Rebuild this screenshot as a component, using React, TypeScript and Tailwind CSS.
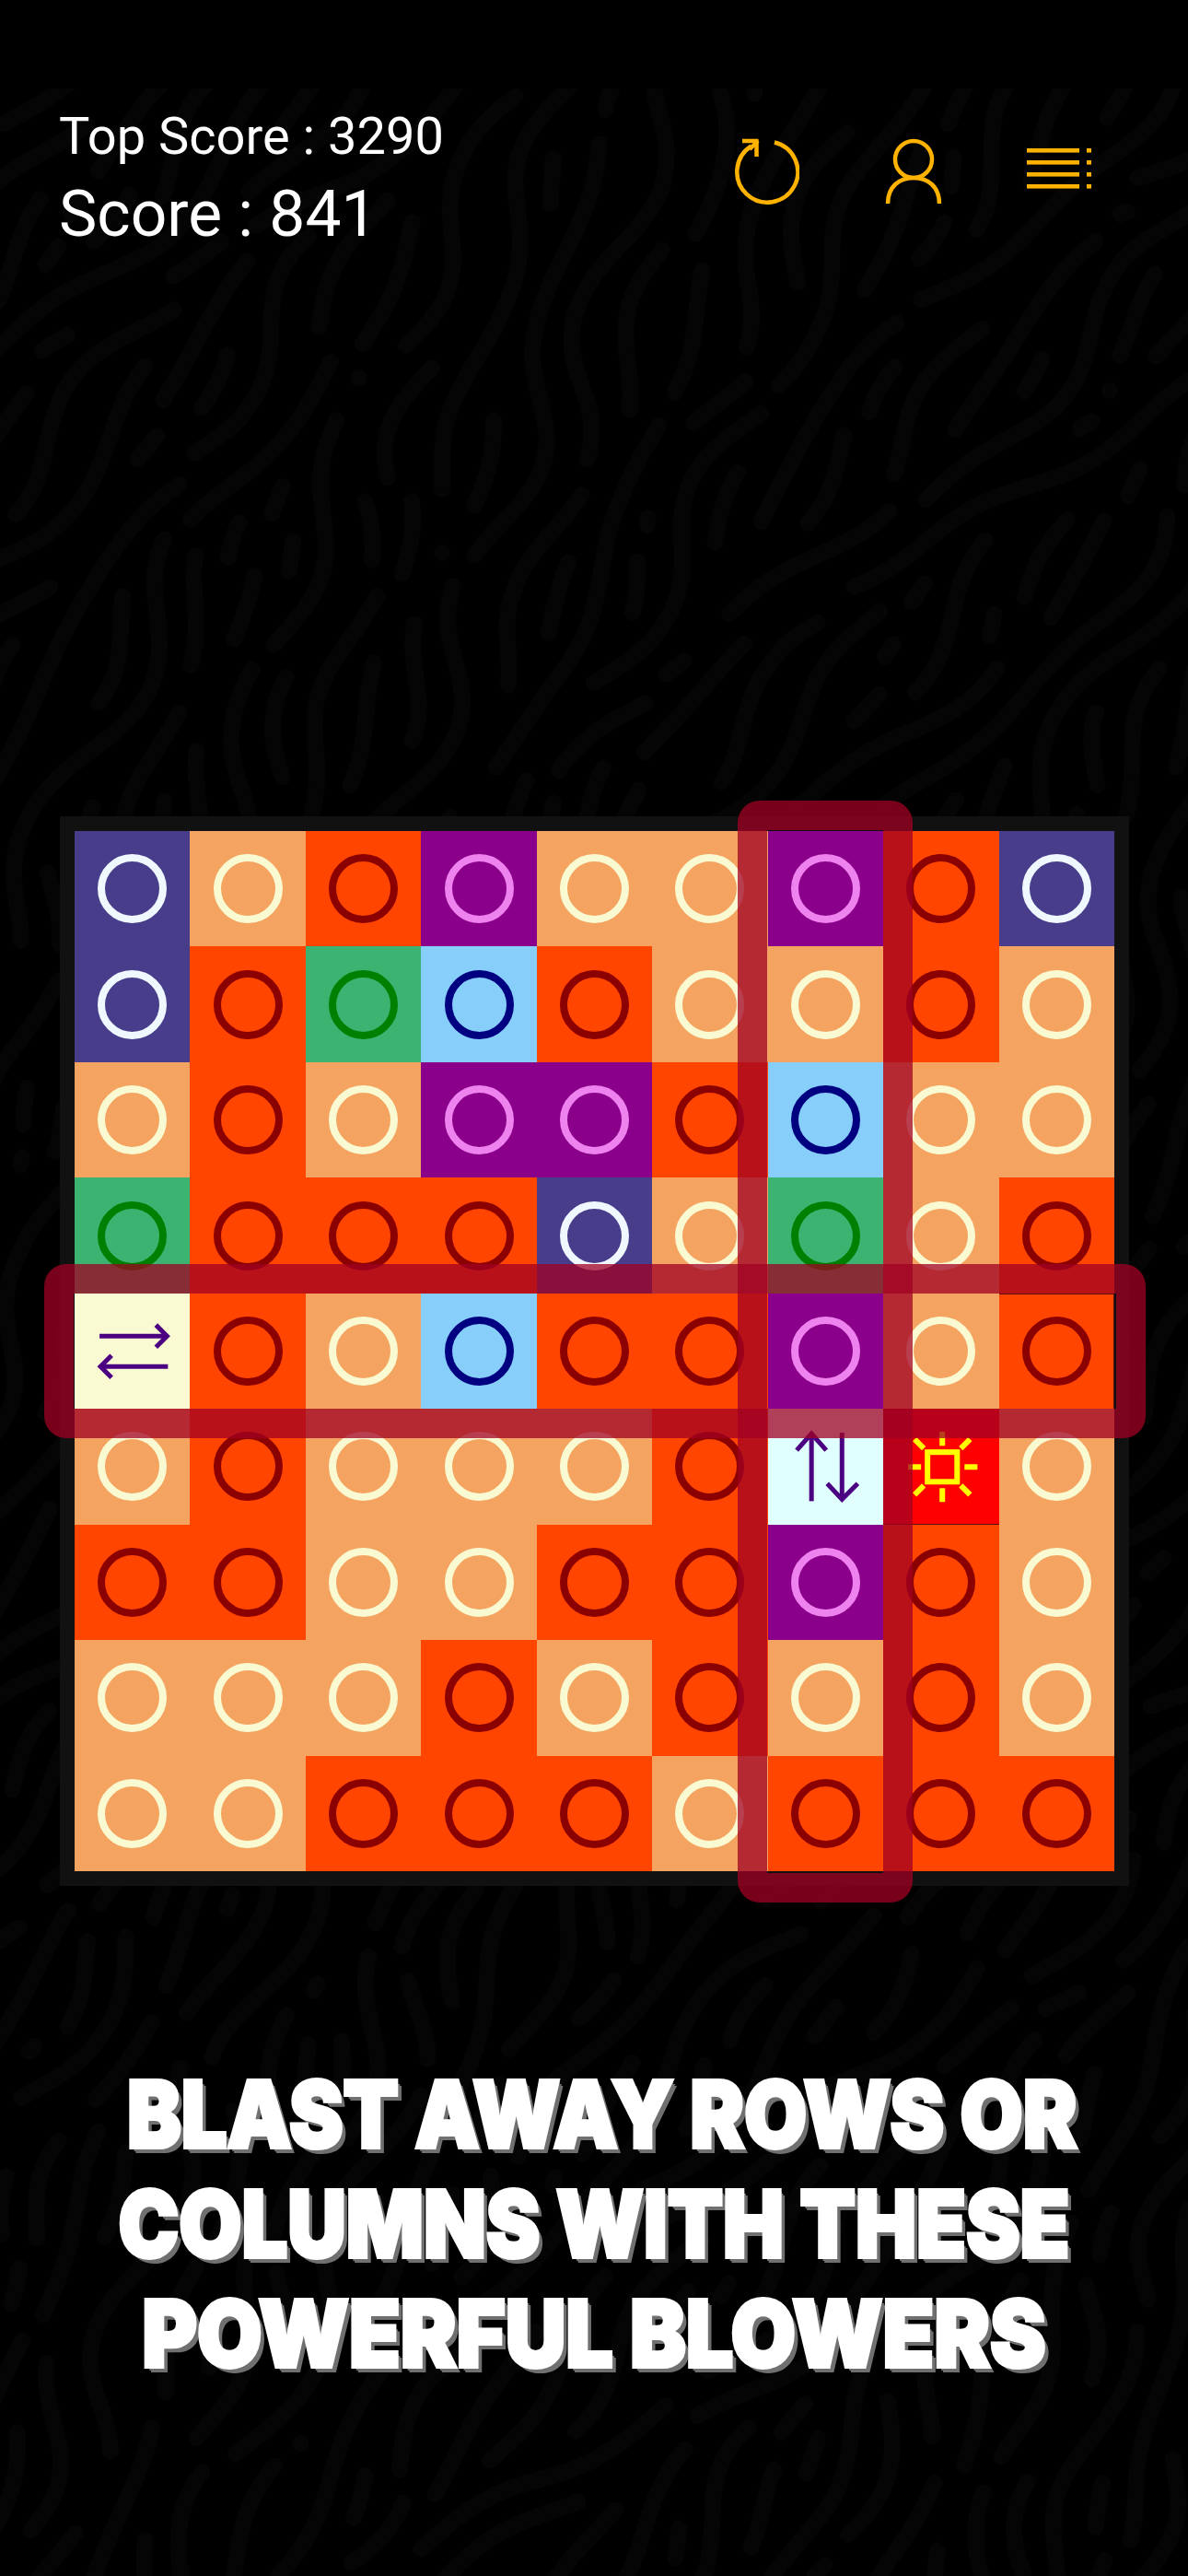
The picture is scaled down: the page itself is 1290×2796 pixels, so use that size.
import React, { useMemo } from "react";

type CellKind = "S" | "O" | "P" | "U" | "B" | "G" | "H" | "V" | "X";

const ROWS: CellKind[][] = [
  ["P", "S", "O", "U", "S", "S", "U", "O", "P"],
  ["P", "O", "G", "B", "O", "S", "S", "O", "S"],
  ["S", "O", "S", "U", "U", "O", "B", "S", "S"],
  ["G", "O", "O", "O", "P", "S", "G", "S", "O"],
  ["H", "O", "S", "B", "O", "O", "U", "S", "O"],
  ["S", "O", "S", "S", "S", "O", "V", "X", "S"],
  ["O", "O", "S", "S", "O", "O", "U", "O", "S"],
  ["S", "S", "S", "O", "S", "O", "S", "O", "S"],
  ["S", "S", "O", "O", "O", "S", "O", "O", "O"],
];

const STYLES: Record<string, { bg: string; ring: string }> = {
  S: { bg: "bg-[#f4a460]", ring: "border-[#fafad2]" },
  O: { bg: "bg-[#ff4500]", ring: "border-[#8b0000]" },
  P: { bg: "bg-[#483d8b]", ring: "border-[#f0f8ff]" },
  U: { bg: "bg-[#8b008b]", ring: "border-[#ee82ee]" },
  B: { bg: "bg-[#87cefa]", ring: "border-[#000080]" },
  G: { bg: "bg-[#3cb371]", ring: "border-[#008000]" },
};

function usePattern(): string[] {
  return useMemo(() => {
    let seed = 48271;
    const rnd = () => {
      seed = (seed * 16807) % 2147483647;
      return seed / 2147483647;
    };
    const W = 1290;
    const H = 2700;
    const SEP = 35;
    const G = 36;
    const cols = Math.ceil(W / G) + 4;
    const rows = Math.ceil(H / G) + 4;
    const grid: [number, number][][] = Array.from({ length: cols * rows }, () => []);
    const idx = (x: number, y: number) =>
      Math.floor(x / G) + 2 + (Math.floor(y / G) + 2) * cols;
    const free = (x: number, y: number, own: Set<string>) => {
      const cx = Math.floor(x / G) + 2;
      const cy = Math.floor(y / G) + 2;
      for (let j = cy - 1; j <= cy + 1; j++) {
        for (let i = cx - 1; i <= cx + 1; i++) {
          const bucket = grid[i + j * cols];
          if (!bucket) continue;
          for (const p of bucket) {
            if (own.has(p[0] + "," + p[1])) continue;
            if ((p[0] - x) ** 2 + (p[1] - y) ** 2 < SEP * SEP) return false;
          }
        }
      }
      return true;
    };
    const angle = (x: number, y: number) =>
      (-62 +
        16 * Math.sin(x / 173 + y / 241) +
        20 * Math.sin(y / 38 + x / 71) +
        12 * Math.cos(x / 47 - y / 83)) *
      (Math.PI / 180);
    const paths: string[] = [];
    for (let n = 0; n < 12000; n++) {
      const sx = rnd() * W;
      const sy = rnd() * H;
      if (!free(sx, sy, new Set())) continue;
      const pts: [number, number][] = [[sx, sy]];
      const maxLen = 8 + Math.floor(rnd() * 50);
      for (const dir of [1, -1]) {
        let x = sx;
        let y = sy;
        const recent = new Set<string>([sx + "," + sy]);
        for (let s = 0; s < maxLen; s++) {
          const a = angle(x, y);
          x += dir * Math.cos(a) * 8;
          y += dir * Math.sin(a) * 8;
          if (x < -20 || y < -20 || x > W + 20 || y > H + 20) break;
          if (!free(x, y, recent)) break;
          recent.add(x + "," + y);
          if (dir === 1) pts.push([x, y]);
          else pts.unshift([x, y]);
        }
      }
      for (const p of pts) {
        const b = grid[idx(p[0], p[1])];
        if (b) b.push(p);
      }
      paths.push(
        pts.length === 1
          ? `M${sx.toFixed(0)} ${sy.toFixed(0)}h0.1`
          : "M" + pts.map((p) => p[0].toFixed(1) + " " + p[1].toFixed(1)).join("L")
      );
    }
    return paths;
  }, []);
}

function Pattern() {
  const paths = usePattern();
  return (
    <svg
      className="absolute left-0 top-[96px] h-[2700px] w-[1290px]"
      viewBox="0 0 1290 2700"
      fill="none"
      stroke="#050505"
      strokeWidth={18}
      strokeLinecap="round"
      strokeLinejoin="round"
    >
      {paths.map((d, i) => (
        <path key={i} d={d} />
      ))}
    </svg>
  );
}

function RefreshIcon() {
  return (
    <svg width="72" height="74" viewBox="0 0 72 74" fill="none" stroke="#ffb300" strokeWidth="4.5">
      <path d="M45 5.5A33 33 0 1 1 20 9.5" />
      <path d="M10 4H27.5M25.5 3V21" />
      <path d="M27 4L18 13" />
    </svg>
  );
}

function UserIcon() {
  return (
    <svg width="62" height="74" viewBox="0 0 62 74" fill="none" stroke="#ffb300" strokeWidth="4.5">
      <circle cx="31" cy="24" r="20" />
      <path d="M3 72C3 54 15 44 31 44C47 44 59 54 59 72" />
    </svg>
  );
}

function MenuIcon() {
  return (
    <svg width="72" height="50" viewBox="0 0 72 50" fill="#ffb300">
      <rect x="0" y="0" width="57" height="4.6" />
      <rect x="0" y="13" width="57" height="4.6" />
      <rect x="0" y="26" width="57" height="4.6" />
      <rect x="0" y="39" width="57" height="4.6" />
      <rect x="65" y="0" width="5" height="4.6" />
      <rect x="65" y="13" width="5" height="4.6" />
      <rect x="65" y="26" width="5" height="4.6" />
      <rect x="65" y="39" width="5" height="4.6" />
    </svg>
  );
}

function HorizontalBlower() {
  return (
    <svg className="h-full w-full" viewBox="0 0 125 125" fill="none" stroke="#4b0082" strokeWidth="5">
      <path d="M27 46H100" />
      <path d="M88 34L100 46L88 58" />
      <path d="M101 79H28" />
      <path d="M40 67L28 79L40 91" />
    </svg>
  );
}

function VerticalBlower() {
  return (
    <svg className="h-full w-full" viewBox="0 0 125 125" fill="none" stroke="#4b0082" strokeWidth="5">
      <path d="M47 100V28" />
      <path d="M31 45L47 27L63 45" />
      <path d="M80 26V98" />
      <path d="M64 81L80 98L97 81" />
    </svg>
  );
}

function SunBomb() {
  return (
    <svg className="h-full w-full" viewBox="0 0 125 125" fill="none" stroke="#ffff00" strokeWidth="6">
      <rect x="48" y="47" width="32" height="32" />
      <path d="M64 25V40M64 86V101M27 63H41M88 63H102" />
      <path d="M34 33L44 43M94 33L84 43M34 93L44 83M94 93L84 83" />
    </svg>
  );
}

function Cell({ kind, index }: { kind: CellKind; index: number }) {
  if (kind === "H")
    return (
      <div className="aspect-square bg-[#fafad2]">
        <HorizontalBlower />
      </div>
    );
  if (kind === "V")
    return (
      <div className="aspect-square bg-[#e0ffff]">
        <VerticalBlower />
      </div>
    );
  if (kind === "X")
    return (
      <div className="aspect-square bg-[#ff0000] shadow-[inset_0_-1px_0_#5a1010]">
        <SunBomb />
      </div>
    );
  const s = STYLES[kind];
  const edge = index === 44 ? "shadow-[inset_0_1px_0_#5a1010,inset_-1px_0_0_#5a1010]" : "";
  return (
    <div className={`flex aspect-square items-center justify-center ${s.bg} ${edge}`}>
      <div className={`h-[75px] w-[75px] rounded-full border-[8px] ${s.ring}`} />
    </div>
  );
}

export default function App() {
  return (
    <div className="relative h-[2796px] w-[1290px] overflow-hidden bg-black font-['Roboto',sans-serif] text-white">
      <Pattern />
      <div className="relative">
        <header className="flex items-start justify-between pl-[64px] pr-[103px] pt-[112px]">
          <div>
            <div className="text-[56px] leading-[72px]">Top Score : 3290</div>
            <div className="mt-[9px] text-[69.5px] leading-[80px]">Score : 841</div>
          </div>
          <div className="flex items-center pt-[37px]">
            <RefreshIcon />
            <div className="ml-[93px]">
              <UserIcon />
            </div>
            <div className="ml-[92px]">
              <MenuIcon />
            </div>
          </div>
        </header>

        <main className="relative ml-[65px] mt-[613px] w-[1161px] bg-[#111111] p-[16px]">
          <div className="grid grid-cols-9">
            {ROWS.flat().map((k, i) => (
              <Cell key={i} kind={k} index={i} />
            ))}
          </div>
          <div className="absolute left-[-17px] top-[486px] h-[189px] w-[1196px] rounded-[24px] border-[32px] border-[#a00023bf]" />
          <div className="absolute left-[736px] top-[-17px] h-[1196px] w-[190px] rounded-[24px] border-[32px] border-[#a00023bf]" />
        </main>

        <div className="mt-[188px] text-center font-['Inter',sans-serif] text-[100px] font-black uppercase leading-[119px] [-webkit-text-stroke:4px_white] [text-shadow:2px_2px_0_#707070,4px_4px_0_#707070,6px_6px_0_#707070]">
          <div className="scale-x-[0.88] pl-[20px]">Blast Away Rows or</div>
          <div className="scale-x-[0.88]">Columns with these</div>
          <div className="scale-x-[0.91]">Powerful Blowers</div>
        </div>
      </div>
    </div>
  );
}
